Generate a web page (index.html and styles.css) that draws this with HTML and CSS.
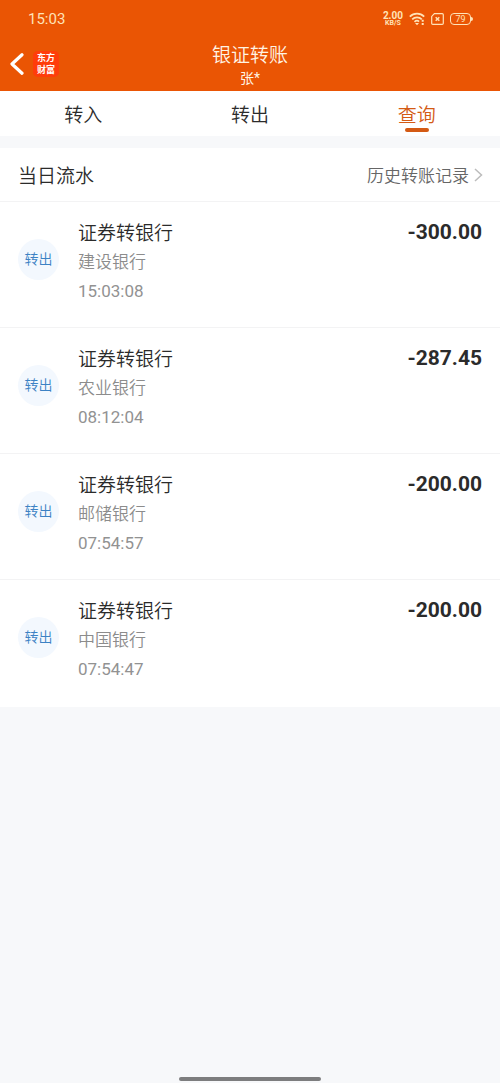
FILE: index.html
```html
<!DOCTYPE html>
<html lang="zh-CN">
<head>
<meta charset="utf-8">
<meta name="viewport" content="width=device-width, initial-scale=1">
<title>银证转账</title>
<link rel="stylesheet" href="styles.css">
</head>
<body>
<header class="header">
  <div class="status">
    <time class="clock">15:03</time>
    <div class="indicators">
      <div class="speed"><span class="speed-value">2.00</span><span class="speed-unit">KB/S</span></div>
      <svg class="wifi" width="16" height="14" viewBox="0 0 16 14" fill="none" stroke="currentColor" stroke-width="1.7" aria-hidden="true">
        <path d="M.8 4.6C4.8.7 11.2.7 15.2 4.6M3.2 7.3c2.6-2.5 7-2.5 9.6 0M5.5 9.8c1.4-1.3 3.4-1.3 4.6-.2"/>
        <path d="M6 11.1h4L8 13.3z" fill="currentColor" stroke="none"/>
        <path d="M13.7 7.8v2M13.7 11v2" stroke-width="2"/>
      </svg>
      <svg class="sim" width="13" height="12" viewBox="0 0 13 12" fill="none" stroke="currentColor" stroke-width="1.2" aria-hidden="true">
        <path d="M3.4.7h7.8q1.1 0 1.1 1.1v8.4q0 1.1-1.1 1.1H1.8q-1.1 0-1.1-1.1V3.4z"/>
        <path d="M4.7 4.2l3.6 3.6M8.3 4.2L4.7 7.8" stroke-width="1.5"/>
      </svg>
      <div class="battery">79</div>
    </div>
  </div>
  <div class="navbar">
    <div class="nav-left">
      <button class="back" type="button" aria-label="返回">
        <svg width="14" height="22" viewBox="0 0 14 22" fill="none" stroke="currentColor" stroke-width="3.2" stroke-linecap="round" stroke-linejoin="round"><path d="M12 1.8L2 11l10 9.2"/></svg>
      </button>
      <div class="logo"><span>东方</span><span>财富</span></div>
    </div>
    <div class="heading">
      <h1 class="title">银证转账</h1>
      <p class="subtitle">张*</p>
    </div>
  </div>
</header>

<nav class="tabs">
  <button class="tab" type="button">转入</button>
  <button class="tab" type="button">转出</button>
  <button class="tab tab-active" type="button">查询</button>
</nav>

<main class="panel">
  <div class="panel-head">
    <h2 class="panel-title">当日流水</h2>
    <a class="history" href="#">历史转账记录
      <svg width="9" height="14" viewBox="0 0 9 14" fill="none" stroke="#bcbcbc" stroke-width="1.5" aria-hidden="true"><path d="M1 1l6.5 6L1 13"/></svg>
    </a>
  </div>
  <ul class="list">
    <li class="item">
      <span class="badge">转出</span>
      <div class="detail"><p class="name">证券转银行</p><p class="meta">建设银行</p><p class="meta time">15:03:08</p></div>
      <span class="amount">-300.00</span>
    </li>
    <li class="item">
      <span class="badge">转出</span>
      <div class="detail"><p class="name">证券转银行</p><p class="meta">农业银行</p><p class="meta time">08:12:04</p></div>
      <span class="amount">-287.45</span>
    </li>
    <li class="item">
      <span class="badge">转出</span>
      <div class="detail"><p class="name">证券转银行</p><p class="meta">邮储银行</p><p class="meta time">07:54:57</p></div>
      <span class="amount">-200.00</span>
    </li>
    <li class="item">
      <span class="badge">转出</span>
      <div class="detail"><p class="name">证券转银行</p><p class="meta">中国银行</p><p class="meta time">07:54:47</p></div>
      <span class="amount">-200.00</span>
    </li>
  </ul>
</main>
<div class="home-bar"></div>
</body>
</html>
```

FILE: styles.css
```css
* {
  box-sizing: border-box;
  margin: 0;
  padding: 0;
}

body {
  display: flex;
  flex-direction: column;
  min-height: 100vh;
  background: #f7f8fa;
  color: #2b2b2b;
  font-family: Roboto, "Noto Sans CJK SC", sans-serif;
  font-weight: 350;
}

button {
  border: 0;
  background: none;
  color: inherit;
  font: inherit;
  cursor: pointer;
}

.header {
  padding-bottom: 4px;
  background: #ea5504;
  color: #fff4e4;
}

.status {
  display: flex;
  align-items: center;
  justify-content: space-between;
  height: 37px;
  padding: 0 27px 0 28px;
  color: #ffe3b8;
}

.clock {
  font-size: 15px;
  font-weight: 400;
}

.indicators {
  display: flex;
  align-items: center;
  gap: 6px;
}

.speed {
  display: flex;
  flex-direction: column;
  align-items: center;
  font-weight: 700;
}

.speed-value {
  font-size: 10px;
  line-height: 9px;
}

.speed-unit {
  font-size: 7px;
  line-height: 7px;
}

.battery {
  position: relative;
  width: 21px;
  height: 12px;
  margin-right: 2px;
  border: 1px solid currentColor;
  border-radius: 4px;
  font-size: 9px;
  font-weight: 400;
  line-height: 10px;
  text-align: center;
}

.battery::after {
  content: "";
  position: absolute;
  top: 3px;
  right: -3px;
  width: 2px;
  height: 4px;
  border-radius: 0 2px 2px 0;
  background: currentColor;
}

.navbar {
  display: grid;
  grid-template-columns: 1fr auto 1fr;
  height: 50px;
}

.nav-left {
  display: flex;
  align-items: center;
  gap: 9px;
  padding: 4px 0 0 10px;
}

.back {
  display: flex;
  color: #fff;
}

.logo {
  display: flex;
  flex-direction: column;
  align-items: center;
  justify-content: center;
  width: 26px;
  height: 26px;
  border-radius: 5px;
  background: #ff3d0a;
  color: #fff;
  font: 700 9px/12px "Noto Sans CJK SC", sans-serif;
}

.logo span {
  height: 12px;
}

.heading {
  padding-top: 5px;
  text-align: center;
}

.title {
  font-size: 19px;
  font-weight: 350;
  line-height: 28px;
}

.subtitle {
  font-size: 14px;
  font-weight: 400;
  line-height: 16px;
}

.tabs {
  display: grid;
  grid-template-columns: repeat(3, 1fr);
  height: 45px;
  margin-bottom: 12px;
  background: #fff;
}

.tab {
  position: relative;
  font-size: 19px;
}

.tab-active {
  color: #d45a14;
}

.tab-active::after {
  content: "";
  position: absolute;
  bottom: 4px;
  left: 50%;
  width: 24px;
  height: 4px;
  margin-left: -12px;
  border-radius: 2px;
  background: currentColor;
}

.panel {
  background: #fff;
}

.panel-head {
  display: flex;
  align-items: center;
  justify-content: space-between;
  height: 53px;
  padding: 0 17px 0 18px;
}

.panel-title {
  font-size: 19px;
  font-weight: 350;
}

.history {
  display: flex;
  align-items: center;
  gap: 5px;
  color: #666;
  font-size: 17px;
  text-decoration: none;
}

.list {
  padding-bottom: 2px;
  list-style: none;
}

.item {
  display: flex;
  align-items: flex-start;
  min-height: 126px;
  padding: 17px 18px 0;
  border-top: 1px solid #f3f3f4;
}

.badge {
  width: 41px;
  height: 41px;
  margin: 20px 19px 0 0;
  border-radius: 50%;
  background: #f3f8fe;
  color: #3c82c4;
  font-size: 14px;
  line-height: 41px;
  text-align: center;
}

.detail {
  flex: 1;
}

.name {
  font-size: 19px;
  line-height: 29px;
}

.meta {
  color: #8c8c8c;
  font-size: 17px;
  line-height: 29px;
}

.time {
  color: #929292;
  font-weight: 400;
}

.amount {
  font-size: 21px;
  font-weight: 700;
  line-height: 26px;
}

.home-bar {
  width: 142px;
  height: 4px;
  margin: auto auto 2px;
  border-radius: 2px;
  background: #7d7d7e;
}
```
